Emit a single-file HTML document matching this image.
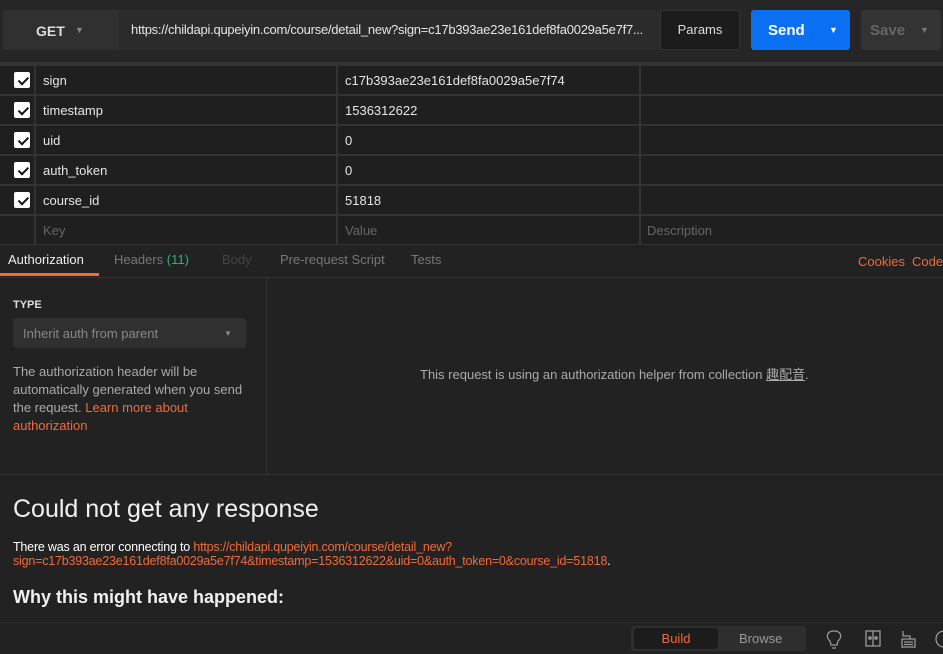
<!DOCTYPE html>
<html><head><meta charset="utf-8"><style>
*{box-sizing:border-box;margin:0;padding:0}
body{width:943px;height:654px;overflow:hidden;background:#222;font-family:"Liberation Sans","Noto Sans CJK SC",sans-serif;color:#ddd;position:relative;font-size:13px}
.a{position:absolute}
.row{position:absolute;left:0;width:943px;height:28px;background:#1f1f1f}
.row span{position:absolute;top:7px;font-size:13px;color:#e6e6e6}
.cb{position:absolute;left:14px;top:6px;width:16px;height:16px;background:#fff;border-radius:2px}
.cb:after{content:"";position:absolute;left:3px;top:2px;width:8px;height:4px;border-left:2.5px solid #111;border-bottom:2.5px solid #111;transform:rotate(-45deg) translate(-1px,3px)}
.vl{position:absolute;top:62px;height:182px;width:2px;background:#333}
</style></head><body>
<div class="a" style="left:0;top:0;width:943px;height:62px;background:#262626"></div>
<div class="a" style="left:3px;top:10px;width:657px;height:40px;background:#303030;border-radius:3px"></div>
<div class="a" style="left:118px;top:10px;width:542px;height:40px;background:#2b2b2b"></div>
<div class="a" style="left:36px;top:23px;font-size:14px;font-weight:bold;color:#ddd">GET</div>
<div class="a" style="left:75px;top:25px;font-size:9px;color:#888">▼</div>
<div class="a" style="left:131px;top:22px;width:520px;overflow:hidden;white-space:nowrap;font-size:13px;letter-spacing:-0.25px;color:#e6e6e6">https://childapi.qupeiyin.com/course/detail_new?sign=c17b393ae23e161def8fa0029a5e7f7...</div>
<div class="a" style="left:660px;top:10px;width:80px;height:40px;background:#1c1c1c;border:1px solid #333;color:#ddd;text-align:center;line-height:38px;font-size:13px">Params</div>
<div class="a" style="left:751px;top:10px;width:99px;height:40px;background:#0a6ff0;border-radius:3px"></div>
<div class="a" style="left:768px;top:22px;font-size:15px;font-weight:bold;color:#fff">Send</div>
<div class="a" style="left:829px;top:25px;font-size:9px;color:#fff">▼</div>
<div class="a" style="left:861px;top:10px;width:80px;height:40px;background:#333;border-radius:3px"></div>
<div class="a" style="left:870px;top:22px;font-size:15px;font-weight:bold;color:#666">Save</div>
<div class="a" style="left:920px;top:25px;font-size:9px;color:#777">▼</div>
<div class="a" style="left:0;top:62px;width:943px;height:183px;background:#333"></div>
<div class="row" style="top:66px"><div class="cb"></div><span style="left:43px">sign</span><span style="left:345px">c17b393ae23e161def8fa0029a5e7f74</span></div>
<div class="row" style="top:96px"><div class="cb"></div><span style="left:43px">timestamp</span><span style="left:345px">1536312622</span></div>
<div class="row" style="top:126px"><div class="cb"></div><span style="left:43px">uid</span><span style="left:345px">0</span></div>
<div class="row" style="top:156px"><div class="cb"></div><span style="left:43px">auth_token</span><span style="left:345px">0</span></div>
<div class="row" style="top:186px"><div class="cb"></div><span style="left:43px">course_id</span><span style="left:345px">51818</span></div>
<div class="row" style="top:216px"><span style="left:43px;color:#666">Key</span><span style="left:345px;color:#666">Value</span><span style="left:647px;color:#666">Description</span></div>
<div class="vl" style="left:34px"></div><div class="vl" style="left:336px"></div><div class="vl" style="left:639px"></div>
<div class="a" style="left:0;top:245px;width:943px;height:33px;background:#222;border-bottom:1px solid #333"></div>
<div class="a" style="left:8px;top:252px;color:#eee">Authorization</div>
<div class="a" style="left:0;top:273px;width:99px;height:3px;background:#f26b3a"></div>
<div class="a" style="left:114px;top:252px;color:#777">Headers <span style="color:#2fb36f">(11)</span></div>
<div class="a" style="left:222px;top:252px;color:#444">Body</div>
<div class="a" style="left:280px;top:252px;color:#777">Pre-request Script</div>
<div class="a" style="left:411px;top:252px;color:#777">Tests</div>
<div class="a" style="left:858px;top:254px;color:#f26b3a">Cookies</div>
<div class="a" style="left:912px;top:254px;color:#f26b3a">Code</div>
<div class="a" style="left:266px;top:278px;width:1px;height:197px;background:#333"></div>
<div class="a" style="left:0;top:474px;width:943px;height:1px;background:#333"></div>
<div class="a" style="left:13px;top:299px;font-size:11px;font-weight:bold;color:#ddd">TYPE</div>
<div class="a" style="left:13px;top:318px;width:233px;height:30px;background:#303030;border-radius:3px"></div>
<div class="a" style="left:23px;top:326px;color:#888">Inherit auth from parent</div>
<div class="a" style="left:224px;top:329px;font-size:8px;color:#888">▼</div>
<div class="a" style="left:13px;top:363px;width:240px;line-height:18px;color:#aaa">The authorization header will be automatically generated when you send the request. <span style="color:#f26b3a">Learn more about authorization</span></div>
<div class="a" style="left:420px;top:364px;color:#aaa">This request is using an authorization helper from collection <u>趣配音</u>.</div>
<div class="a" style="left:13px;top:495px;font-size:25px;color:#f0f0f0">Could not get any response</div>
<div class="a" style="left:13px;top:540px;font-size:12.5px;line-height:14px;color:#fff;letter-spacing:-0.2px">There was an error connecting to <span style="color:#f26b3a">https://childapi.qupeiyin.com/course/detail_new?<br>sign=c17b393ae23e161def8fa0029a5e7f74&amp;timestamp=1536312622&amp;uid=0&amp;auth_token=0&amp;course_id=51818</span>.</div>
<div class="a" style="left:13px;top:587px;font-size:18px;font-weight:bold;color:#f0f0f0">Why this might have happened:</div>
<div class="a" style="left:0;top:622px;width:943px;height:32px;background:#222;border-top:1px solid #2c2c2c"></div>
<div class="a" style="left:631px;top:626px;width:175px;height:25px;background:#2e2e2e;border-radius:3px"></div>
<div class="a" style="left:634px;top:628px;width:84px;height:21px;background:#1c1c1c;border-radius:3px;color:#f26b3a;text-align:center;line-height:21px">Build</div>
<div class="a" style="left:739px;top:631px;color:#999">Browse</div>
<svg class="a" style="left:824px;top:628px" width="120" height="22" fill="none" stroke="#999" stroke-width="1.3">
<path d="M6 13 C2 10 2 3 10 3 C18 3 18 10 14 13 L13 17 H7 Z M8 20 H12"/>
<rect x="42" y="3" width="14" height="15"/><path d="M49 3 V18"/><rect x="45" y="9" width="2" height="2" fill="#999"/><rect x="51" y="9" width="2" height="2" fill="#999"/>
<path d="M79 3 V8 H86 V11"/><rect x="78" y="11" width="13" height="8"/><path d="M80 14 H89 M80 16.5 H89"/>
<circle cx="120" cy="11" r="8"/>
</svg>
</body></html>
